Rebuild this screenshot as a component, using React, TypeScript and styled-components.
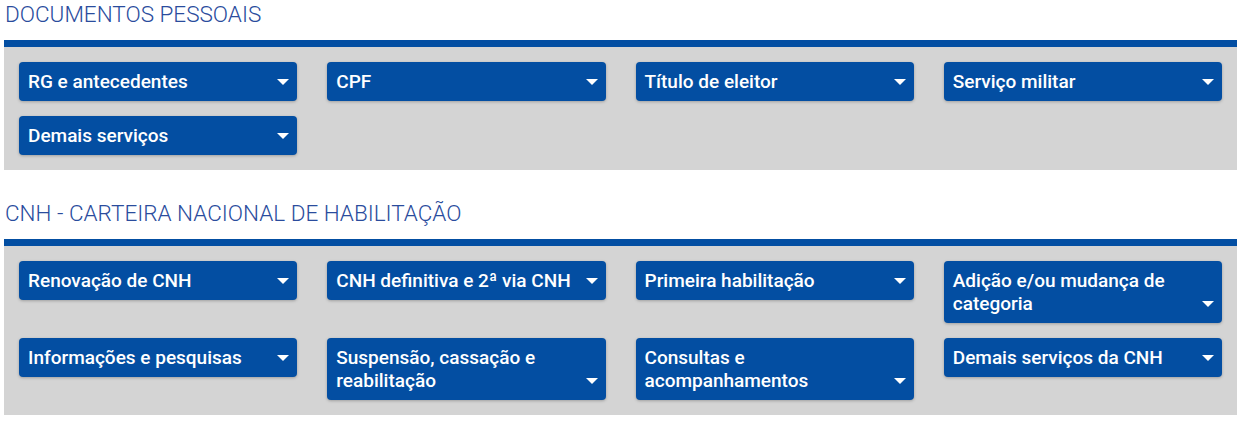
import React from "react";
import styled, { createGlobalStyle } from "styled-components";

const GlobalStyle = createGlobalStyle`
  html, body {
    margin: 0;
    padding: 0;
    background: #fff;
    font-family: Roboto, "Liberation Sans", Arial, sans-serif;
  }
`;

const s = {
  Page: styled.div`
    display: flex;
    flex-direction: column;
    gap: 29px;
    padding: 0 10px 0 4px;
  `,
  Section: styled.section`
    display: flex;
    flex-direction: column;
  `,
  Title: styled.h2`
    margin: 0 0 11px 0;
    padding-left: 1px;
    font-size: 22.5px;
    line-height: 29px;
    font-weight: 300;
    color: #2a4c9d;
  `,
  Panel: styled.div`
    background: #d4d4d4;
    border-top: 7px solid #034ea2;
    padding: 15px;
  `,
  Grid: styled.div`
    display: grid;
    grid-template-columns: repeat(4, 1fr);
    column-gap: 30px;
    row-gap: 15px;
    align-items: start;
  `,
  Dropdown: styled.button`
    display: flex;
    align-items: flex-end;
    justify-content: space-between;
    gap: 8px;
    width: 100%;
    padding: 8px 8px 8px 9px;
    border: none;
    border-radius: 4px;
    background: #034ea2;
    color: #fff;
    font-family: inherit;
    font-size: 19px;
    font-weight: 500;
    line-height: 23px;
    text-align: left;
    box-shadow: 0 1px 3px rgba(0, 0, 0, 0.25);
    cursor: pointer;
  `,
  Label: styled.span`
    flex: 1;
  `,
  Caret: styled.span`
    flex: none;
    width: 0;
    height: 0;
    margin-bottom: 8px;
    border-left: 6px solid transparent;
    border-right: 6px solid transparent;
    border-top: 6px solid #fff;
  `
};

interface GroupProps {
  title: string;
  items: string[];
}

const Group: React.FC<GroupProps> = ({ title, items }) => (
  <s.Section>
    <s.Title>{title}</s.Title>
    <s.Panel>
      <s.Grid>
        {items.map(item => (
          <s.Dropdown key={item} type="button">
            <s.Label>{item}</s.Label>
            <s.Caret />
          </s.Dropdown>
        ))}
      </s.Grid>
    </s.Panel>
  </s.Section>
);

const documentos = [
  "RG e antecedentes",
  "CPF",
  "Título de eleitor",
  "Serviço militar",
  "Demais serviços"
];

const cnh = [
  "Renovação de CNH",
  "CNH definitiva e 2ª via CNH",
  "Primeira habilitação",
  "Adição e/ou mudança de categoria",
  "Informações e pesquisas",
  "Suspensão, cassação e reabilitação",
  "Consultas e acompanhamentos",
  "Demais serviços da CNH"
];

export default function App() {
  return (
    <>
      <GlobalStyle />
      <s.Page>
        <Group title="DOCUMENTOS PESSOAIS" items={documentos} />
        <Group title="CNH - CARTEIRA NACIONAL DE HABILITAÇÃO" items={cnh} />
      </s.Page>
    </>
  );
}
